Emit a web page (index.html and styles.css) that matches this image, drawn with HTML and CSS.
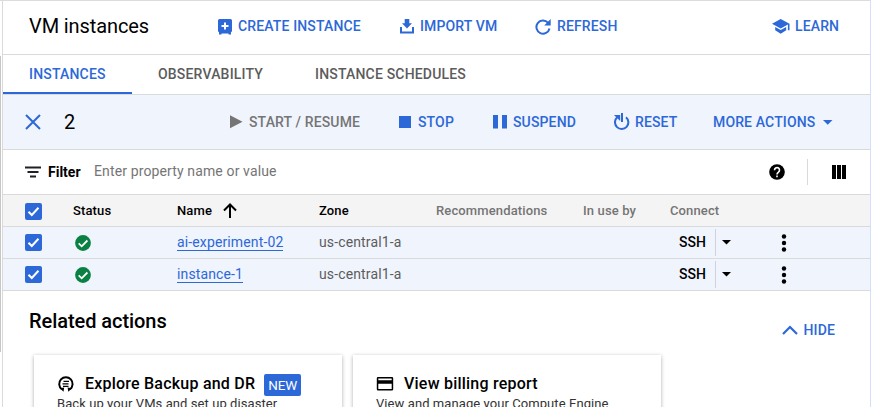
FILE: index.html
```html
<!DOCTYPE html>
<html lang="en">
<head>
<meta charset="utf-8">
<title>VM instances</title>
<link rel="stylesheet" href="styles.css">
</head>
<body>
<div class="app">
  <div class="rail"></div>
  <main class="page">
    <header class="header">
      <h1 class="title">VM instances</h1>
      <button class="btn"><svg width="14" height="16" viewBox="0 0 14 16"><path fill="currentColor" fill-rule="evenodd" d="M1.500 0h11Q14 0 14 1.500V12.700H13V15.500H10.500V14.500H3.500V15.500H1V12.700H0V1.500Q0 0 1.500 0ZM6 3.500V6H3.500V8H6V10.500H8V8H10.500V6H8V3.500Z"/></svg><span>CREATE INSTANCE</span></button>
      <button class="btn"><svg width="14" height="16" viewBox="0 0 14 16"><path fill="currentColor" d="M4.700 0h4.600v4.300h2.700L7 9.500 2 4.300h2.700zM0 8h2v4.500h10V8h2v6.500H0z"/></svg><span>IMPORT VM</span></button>
      <button class="btn"><svg width="16" height="16" viewBox="0 0 16 16"><path fill="none" stroke="currentColor" stroke-width="2" d="M13 3.700A6.600 6.600 0 1 0 14.500 9.500"/><path fill="currentColor" d="M15.700 0v6.500H9.200z"/></svg><span>REFRESH</span></button>
      <button class="btn learn"><svg width="18" height="16" viewBox="0 0 18 16"><path fill="currentColor" d="M8.700 0 0 4.800l8.700 4.700 7.200-3.900v5.600h1.600V4.800zM3.200 8v3.300l5.500 3.500 5.500-3.500V8l-5.500 3z"/></svg><span>LEARN</span></button>
    </header>
    <nav class="tabs">
      <a class="tab active">INSTANCES</a>
      <a class="tab">OBSERVABILITY</a>
      <a class="tab">INSTANCE SCHEDULES</a>
    </nav>
    <section class="actions">
      <svg class="close" width="16" height="16" viewBox="0 0 16 16"><path stroke="currentColor" stroke-width="2" d="m1 1 14 14M15 1 1 15"/></svg>
      <span class="count">2</span>
      <button class="btn disabled"><svg width="13" height="16" viewBox="0 0 13 16"><path fill="currentColor" d="M0 1.200 12.500 7.700 0 14.300z"/></svg><span>START / RESUME</span></button>
      <button class="btn stop"><svg width="12" height="16" viewBox="0 0 12 16"><path fill="currentColor" d="M0 2h12v12H0z"/></svg><span>STOP</span></button>
      <button class="btn"><svg width="14" height="16" viewBox="0 0 14 16"><path fill="currentColor" d="M0 1h5v13.500H0zM9 1h5v13.500H9z"/></svg><span>SUSPEND</span></button>
      <button class="btn reset"><svg width="16" height="18" viewBox="0 0 16 18"><path fill="none" stroke="currentColor" stroke-width="2" d="M3 4.500A6.700 6.700 0 1 0 12 4.200M8 0v9"/><path fill="currentColor" d="M0 2h6.200v6z"/></svg><span>RESET</span></button>
      <button class="btn"><span>MORE ACTIONS</span><svg class="caret" width="10" height="5" viewBox="0 0 10 5"><path fill="currentColor" d="M0 0h9.500L4.750 4.800z"/></svg></button>
    </section>
    <section class="filter">
      <svg width="16" height="12" viewBox="0 0 16 12"><path fill="#202124" d="M0 .5h16v2H0zM2.500 5h11v2h-11zM5 9.500h6v2H5z"/></svg>
      <span class="filter-label">Filter</span>
      <span class="filter-hint">Enter property name or value</span>
      <svg width="16" height="16" viewBox="0 0 16 16"><circle cx="8" cy="8" r="7.800"/><path fill="none" stroke="#fff" stroke-width="1.600" d="M5.500 6.200a2.500 2.500 0 1 1 4 1.900C8.500 8.900 8 9.200 8 10.500"/><path fill="#fff" d="M7.200 11.500h1.600v1.700H7.200z"/></svg>
      <span class="divider"></span>
      <svg width="14" height="14" viewBox="0 0 14 14"><path d="M0 0h4v14H0zM5 0h4v14H5zM10 0h4v14h-4z"/></svg>
    </section>
    <section class="table">
      <div class="row head">
        <span class="check"><svg width="17" height="17" viewBox="0 0 17 17"><path d="m3.500 8.700 3.300 3.300 6.700-7.200"/></svg></span>
        <span>Status</span>
        <span class="name-head"><span>Name</span><svg width="14" height="15" viewBox="0 0 14 15"><path fill="none" stroke="#000" stroke-width="2" d="M7 15V1.500M1 7.500l6-6 6 6"/></svg></span>
        <span>Zone</span>
        <span class="muted">Recommendations</span>
        <span class="muted">In use by</span>
        <span class="muted">Connect</span>
      </div>
      <div class="row">
        <span class="check"><svg width="17" height="17" viewBox="0 0 17 17"><path d="m3.500 8.700 3.300 3.300 6.700-7.200"/></svg></span>
        <svg class="ok" width="16" height="16" viewBox="0 0 16 16"><circle cx="8" cy="8" r="7.900"/><path d="m3.700 8.300 3 3L12.400 5.500"/></svg>
        <a class="link">ai-experiment-02</a>
        <span class="zone">us-central1-a</span>
        <span></span><span></span>
        <span class="ssh"><b>SSH</b><i></i><svg width="9" height="5" viewBox="0 0 9 5"><path d="M0 0h9L4.500 4.500z"/></svg></span>
        <svg class="kebab" width="6" height="18" viewBox="0 0 6 18"><circle cx="3" cy="2.500" r="2.200"/><circle cx="3" cy="9" r="2.200"/><circle cx="3" cy="15.500" r="2.200"/></svg>
      </div>
      <div class="row">
        <span class="check"><svg width="17" height="17" viewBox="0 0 17 17"><path d="m3.500 8.700 3.300 3.300 6.700-7.200"/></svg></span>
        <svg class="ok" width="16" height="16" viewBox="0 0 16 16"><circle cx="8" cy="8" r="7.900"/><path d="m3.700 8.300 3 3L12.400 5.500"/></svg>
        <a class="link">instance-1</a>
        <span class="zone">us-central1-a</span>
        <span></span><span></span>
        <span class="ssh"><b>SSH</b><i></i><svg width="9" height="5" viewBox="0 0 9 5"><path d="M0 0h9L4.500 4.500z"/></svg></span>
        <svg class="kebab" width="6" height="18" viewBox="0 0 6 18"><circle cx="3" cy="2.500" r="2.200"/><circle cx="3" cy="9" r="2.200"/><circle cx="3" cy="15.500" r="2.200"/></svg>
      </div>
    </section>
    <section class="related">
      <div class="related-head">
        <h2>Related actions</h2>
        <button class="btn hide"><svg width="16" height="10" viewBox="0 0 16 10"><path fill="none" stroke="currentColor" stroke-width="2.200" d="m1 9 7-7 7 7"/></svg><span>HIDE</span></button>
      </div>
      <div class="cards">
        <article class="card">
          <h3><svg width="18" height="16" viewBox="0 0 18 16"><path fill="none" stroke="#000" stroke-width="2" d="M4.800 13.200A6.700 6.700 0 1 1 13 13.200"/><path fill="none" stroke="#000" stroke-width="1.300" d="M6.500 5.400h5.500M5.500 7.900h6M6 10.400h5.500"/><path d="M3 12.200 7.200 11.400 6.500 15.800zM15 12.200l-4.400-.8.700 4.400z"/></svg><span>Explore Backup and DR</span><span class="new">NEW</span></h3>
          <p>Back up your VMs and set up disaster</p>
        </article>
        <article class="card">
          <h3><svg width="18" height="16" viewBox="0 0 18 16"><path fill-rule="evenodd" d="M2 1h14q1.200 0 1.200 1.300v10.900q0 1.300-1.200 1.300H2q-1.200 0-1.200-1.300V2.300Q.8 1 2 1ZM2.300 2.500V4.300H15.700V2.500ZM2.300 7.700V13H15.700V7.700Z"/></svg><span>View billing report</span></h3>
          <p>View and manage your Compute Engine</p>
        </article>
      </div>
    </section>
  </main>
</div>
</body>
</html>
```
FILE: styles.css
```css
* { box-sizing: border-box; }
body { margin: 0; font-family: Roboto, "Liberation Sans", sans-serif; font-size: 14px; color: #000; background: #fff; }
h1, h2, h3, p { margin: 0; }
svg { display: block; flex: none; }
.app { display: flex; width: 871px; height: 407px; overflow: hidden; border-top: 1px solid #dadce0; }
.rail { flex: none; width: 1px; height: 296px; margin: 55px 1px 0 0; background: #c6c6c6; }
.page { flex: 1; min-width: 0; border-left: 1px solid #dadada; border-right: 1px solid #d3e0fb; }
.btn { display: flex; align-items: center; padding: 0; border: 0; background: none; font: 500 14px/20px Roboto, sans-serif; letter-spacing: .14px; color: #2c68d8; white-space: nowrap; text-align: left; }
.btn svg + span { margin-left: 6px; }
.stop svg + span { margin-left: 7px; }
.learn svg + span, .reset svg + span, .hide svg + span { margin-left: 5px; }
.disabled { color: #757575; }
.header { display: grid; grid-template-columns: 189px 182px 135px 237px 1fr; align-items: center; height: 54px; padding: 0 0 2px 26px; border-bottom: 1px solid #dadada; }
.header .btn span { margin-top: -2px; }
.title { font-size: 20px; font-weight: 400; line-height: 26px; letter-spacing: -.1px; margin-top: -1px; }
.tabs { display: flex; height: 40px; border-bottom: 1px solid #dadada; }
.tab { display: flex; align-items: center; height: 39px; padding: 0 26px; font-weight: 500; letter-spacing: .18px; color: #5c5c5c; border-bottom: 2px solid transparent; white-space: nowrap; }
.tab.active { width: 129px; color: #2c68d8; border-color: #2c68d8; }
.actions { display: grid; grid-template-columns: 39px 166px 169px 94px 121px 99px 1fr; align-items: center; height: 55px; padding-left: 22px; background: #f0f4fd; border-bottom: 1px solid #dadada; }
.close { color: #2c68d8; }
.count { font-size: 20px; line-height: 26px; }
.caret { margin-left: 8px; }
.filter { display: grid; grid-template-columns: 23px 46px 675px 38px 25px 1fr; align-items: center; height: 45px; padding-left: 22px; border-bottom: 1px solid #dadada; }
.filter-label { font-weight: 700; }
.filter-hint { color: #757575; margin-top: -2px; letter-spacing: .13px; }
.divider { width: 1px; height: 26px; background: #dadada; }
.row { display: grid; grid-template-columns: 48px 104px 142px 117px 147px 87px 108px 1fr; align-items: center; height: 32px; padding-left: 22px; background: #f0f4fd; border-bottom: 1px solid #dadada; white-space: nowrap; letter-spacing: .13px; }
.head { background: #f4f4f4; font-size: 13px; font-weight: 500; }
.muted { color: #757575; }
.check { width: 17px; height: 17px; border-radius: 2px; background: #2c68d8; }
.check path { fill: none; stroke: #fff; stroke-width: 2; }
.head .check { margin-top: 1px; }
.name-head { display: flex; align-items: center; gap: 11px; }
.ok { margin-left: 2px; }
.ok circle { fill: #0b8043; }
.ok path { fill: none; stroke: #fff; stroke-width: 1.8; }
.link { justify-self: start; color: #2c68d8; line-height: 16px; border-bottom: 1px solid #2c68d8; }
.zone { color: #5c5c5c; margin-top: -1px; }
.ssh { display: flex; align-items: center; padding-left: 9px; }
.ssh b { width: 36px; margin-top: -1px; font-weight: 500; letter-spacing: 0; }
.ssh i { width: 1px; height: 27px; margin-right: 6px; background: #d0d3d9; }
.ssh svg { margin-top: -1px; }
.kebab { margin-left: 3px; }
.related { padding: 17px 35px 0 26px; }
.related-head { display: flex; justify-content: space-between; height: 47px; }
.related h2 { font-size: 20px; line-height: 26px; font-weight: 500; letter-spacing: -.06px; }
.hide { height: 20px; margin-top: 12px; }
.cards { display: flex; gap: 11px; padding-left: 5px; }
.card { flex: none; width: 308px; height: 100px; padding: 18px 23px; background: #fff; box-shadow: 0 1px 4px rgba(0,0,0,.32); white-space: nowrap; }
.card h3 { display: flex; align-items: center; height: 22px; font-size: 16px; font-weight: 500; letter-spacing: .22px; }
.card h3 svg { margin-right: 10px; }
.card h3 span:not(.new) { margin-top: -1px; }
.card h3 .new { width: 37px; margin: 2px 0 0 9px; border-radius: 2px; background: #2c68d8; color: #fff; font-size: 13.5px; font-weight: 400; line-height: 22px; letter-spacing: -.1px; text-align: center; }
.card p { font-size: 13px; line-height: 18px; color: #333; letter-spacing: .08px; }
```
